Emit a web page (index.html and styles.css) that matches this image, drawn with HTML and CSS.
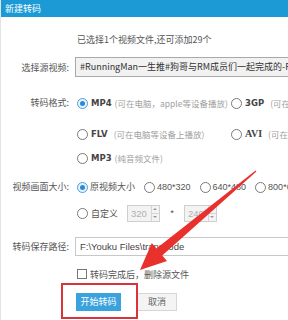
FILE: index.html
```html
<!DOCTYPE html>
<html lang="zh">
<head>
<meta charset="utf-8">
<link rel="stylesheet" href="styles.css">
</head>
<body>
<div class="win">
  <div class="titlebar">新建转码</div>
  <div class="content">
    <div class="info">已选择1个视频文件,还可添加29个</div>

    <div class="row row-src">
      <div class="lbl">选择源视频:</div>
      <div class="input src">#RunningMan一生推#狗哥与RM成员们一起完成的-RRRRR</div>
    </div>

    <div class="row row-fmt">
      <div class="lbl lbl-top">转码格式:</div>
      <div class="fmt-grid">
        <div class="opt"><span class="radio on"></span><b>MP4</b><span class="desc">(可在电脑，apple等设备播放)</span></div>
        <div class="opt"><span class="radio"></span><b>3GP</b><span class="desc desc-w">(可在电脑等设备上播放)</span></div>
        <div class="opt"><span class="radio"></span><b>FLV</b><span class="desc desc-w">(可在电脑等设备上播放)</span></div>
        <div class="opt"><span class="radio"></span><b class="avi">AVI</b><span class="desc desc-w">(可在电脑等设备上播放)</span></div>
        <div class="opt opt-last"><span class="radio"></span><b>MP3</b><span class="desc">(纯音频文件)</span></div>
      </div>
    </div>

    <div class="row row-size">
      <div class="lbl lbl-top">视频画面大小:</div>
      <div class="size-box">
        <div class="size-line">
          <div class="opt"><span class="radio on"></span><span class="txt">原视频大小</span></div>
          <div class="opt"><span class="radio"></span><span class="txt num">480*320</span></div>
          <div class="opt"><span class="radio"></span><span class="txt num">640*480</span></div>
          <div class="opt"><span class="radio"></span><span class="txt num">800*600</span></div>
        </div>
        <div class="size-line line2">
          <div class="opt"><span class="radio"></span><span class="txt">自定义</span></div>
          <div class="spin"><span class="spin-val">320</span><span class="spin-btns"><i class="up"></i><i class="down"></i></span></div>
          <span class="times">*</span>
          <div class="spin"><span class="spin-val">240</span><span class="spin-btns"><i class="up"></i><i class="down"></i></span></div>
        </div>
      </div>
    </div>

    <div class="row row-path">
      <div class="lbl">转码保存路径:</div>
      <div class="input path">F:\Youku Files\transcode</div>
    </div>

    <div class="row row-check">
      <div class="lbl"></div>
      <div class="check-line"><span class="checkbox"></span><span class="txt">转码完成后，删除源文件</span></div>
    </div>

    <div class="row row-btns">
      <div class="lbl"></div>
      <div class="btns">
        <div class="btn primary">开始转码</div>
        <div class="btn">取消</div>
      </div>
    </div>
  </div>

  <div class="mark-box"></div>
  <svg class="arrow" width="288" height="320" viewBox="0 0 288 320">
    <polygon fill="#e8302c" points="256.4,171.6 162.2,255.5 167,261 140,270 151.8,243 156.4,248.6 255.6,170.4"/>
  </svg>
</div>
</body>
</html>
```

FILE: styles.css
```css
* { box-sizing: border-box; }
html, body { margin: 0; padding: 0; }
body {
  width: 288px;
  height: 320px;
  overflow: hidden;
  background: #fff;
  font-family: "Noto Sans CJK SC", "Noto Sans", sans-serif;
  font-size: 9px;
  color: #555;
}
.win {
  position: relative;
  width: 288px;
  height: 320px;
  border-left: 1px solid #e3e3e3;
  overflow: hidden;
}
.titlebar {
  height: 17px;
  background: #1b9ad6;
  color: #fff;
  font-size: 9px;
  line-height: 17px;
  padding-left: 4px;
}
.content {
  display: flex;
  flex-direction: column;
}
.info {
  margin: 17px 0 0 76px;
  height: 12px;
  line-height: 12px;
  color: #555;
  white-space: nowrap;
}
.row {
  display: grid;
  grid-template-columns: 74px 213px;
  align-items: center;
}
.lbl {
  text-align: right;
  padding-right: 6px;
  white-space: nowrap;
  color: #555;
}
.lbl-top { align-self: start; line-height: 12px; }
.row-src { margin-top: 11px; }
.input {
  height: 20px;
  line-height: 18px;
  border: 1px solid #a9a9a9;
  border-right: none;
  padding-left: 4px;
  white-space: nowrap;
  overflow: hidden;
  width: 213px;
  color: #333;
}
.src { background: #f2f2f2; font-size: 9px; }
.row-fmt { margin-top: 20px; }
.fmt-grid {
  display: grid;
  grid-template-columns: 154px 59px;
  row-gap: 19px;
  margin-left: 2px;
  overflow: hidden;
}
.opt {
  display: flex;
  align-items: center;
  height: 12px;
  line-height: 12px;
  white-space: nowrap;
}
.opt-last { margin-top: -7px; }
.radio {
  width: 11px;
  height: 11px;
  border-radius: 50%;
  border: 1px solid #7a7a7a;
  background: #fff;
  flex: none;
  margin-right: 3px;
  position: relative;
}
.radio.on { border-color: #4a9fdc; background: #e8f3fb; }
.radio.on::after {
  content: "";
  position: absolute;
  left: 2px; top: 2px;
  width: 5px; height: 5px;
  border-radius: 50%;
  background: #2a8ad4;
}
.opt b { font-weight: 600; color: #444; font-family: "DejaVu Sans", sans-serif; font-size: 8.5px; }
.opt b.avi { font-family: "Liberation Serif", serif; font-size: 10px; }
.desc { color: #a0a0a0; margin-left: 3px; font-size: 8.5px; }
.desc-w { margin-left: 6px; }
.row-size { margin-top: 17px; }
.size-box { display: flex; flex-direction: column; margin-left: 2px; overflow: hidden; }
.size-line { display: flex; align-items: center; gap: 9px; height: 12px; }
.size-line .radio { margin-right: 2px; }
.size-line .txt { color: #555; }
.num { font-family: "Liberation Sans", sans-serif; font-size: 9px; }
.line2 { margin-top: 12px; gap: 0; height: 17px; }
.line2 .opt { width: 50px; }
.line2 .radio { margin-right: 3px; }
.spin {
  display: flex;
  width: 33px;
  height: 17px;
  border: 1px solid #cfcfcf;
  background: #f3f3f3;
}
.spin-val {
  flex: 1;
  line-height: 15px;
  padding-left: 3px;
  color: #b0b0b0;
  font-family: "Liberation Sans", sans-serif;
  font-size: 9.5px;
}
.spin-btns {
  width: 8px;
  border-left: 1px solid #d5d5d5;
  display: flex;
  flex-direction: column;
}
.spin-btns i { flex: 1; position: relative; }
.spin-btns i.up { border-bottom: 1px solid #d5d5d5; }
.spin-btns i::after {
  content: "";
  position: absolute;
  left: 1px; top: 2px;
  border-left: 2px solid transparent;
  border-right: 2px solid transparent;
}
.spin-btns i.up::after { border-bottom: 2px solid #999; }
.spin-btns i.down::after { border-top: 2px solid #999; }
.times { width: 24px; text-align: center; color: #666; font-size: 10px; }
.row-path { margin-top: 15px; }
.path { background: #fff; border-color: #c8c8c8; height: 19px; line-height: 17px; color: #444; font-family: "Liberation Sans", sans-serif; font-size: 9.5px; }
.row-check { margin-top: 12px; }
.check-line { display: flex; align-items: center; height: 12px; margin-left: 2px; }
.checkbox { width: 10px; height: 10px; border: 1px solid #777; background: #fff; margin-right: 3px; }
.check-line .txt { color: #555; }
.row-btns { margin-top: 13px; }
.btns { display: flex; gap: 16px; margin-left: 1px; }
.btn {
  height: 18px;
  line-height: 16px;
  padding: 0 8px;
  border: 1px solid #d6d6d6;
  background: #f4f4f4;
  color: #666;
  text-align: center;
  width: 40px;
}
.btn.primary {
  width: 45px;
  background: #3aa2dc;
  border-color: #3aa2dc;
  color: #fff;
  padding: 0;
}
.mark-box {
  position: absolute;
  left: 60px;
  top: 283px;
  width: 77px;
  height: 36px;
  border: 2px solid #d8343a;
}
.arrow { position: absolute; left: -1px; top: 0; pointer-events: none; }
```
